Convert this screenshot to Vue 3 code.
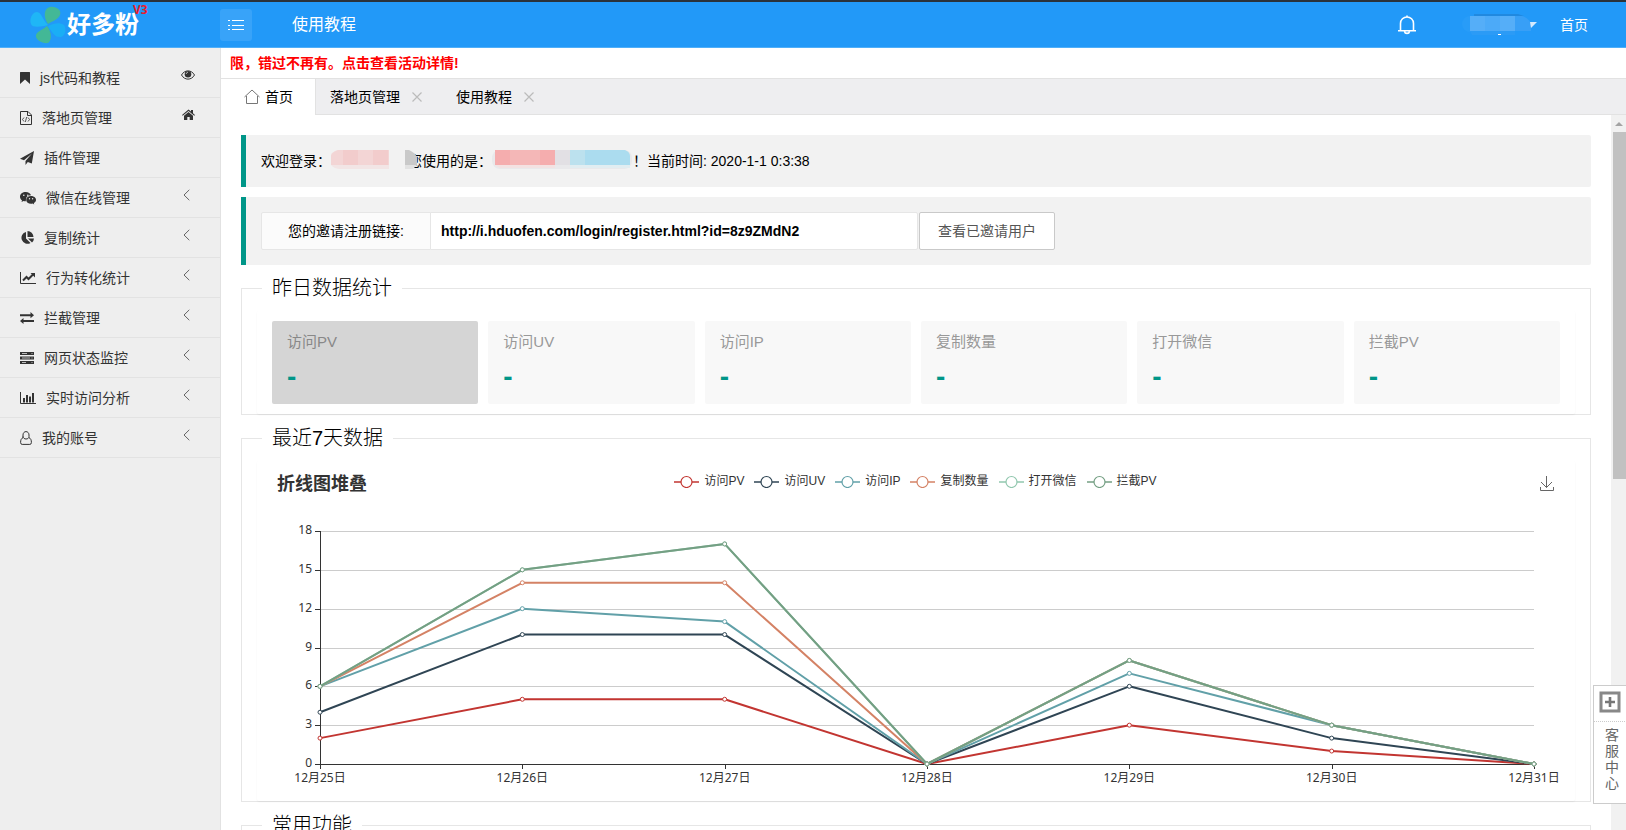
<script setup>
import { ref, computed, onMounted, onBeforeUnmount } from 'vue'

const menu = [
  { icon: 'bookmark', w: 10, label: 'js代码和教程', right: 'eye' },
  { icon: 'filecode', w: 12, label: '落地页管理', right: 'home' },
  { icon: 'plane', w: 14, label: '插件管理', right: '' },
  { icon: 'wechat', w: 16, label: '微信在线管理', right: 'more' },
  { icon: 'pie', w: 14, label: '复制统计', right: 'more' },
  { icon: 'line', w: 16, label: '行为转化统计', right: 'more' },
  { icon: 'exchange', w: 14, label: '拦截管理', right: 'more' },
  { icon: 'server', w: 14, label: '网页状态监控', right: 'more' },
  { icon: 'bars', w: 16, label: '实时访问分析', right: 'more' },
  { icon: 'user', w: 12, label: '我的账号', right: 'more' }
]

const stats = ['访问PV', '访问UV', '访问IP', '复制数量', '打开微信', '拦截PV']
const inviteLink = ref('http://i.hduofen.com/login/register.html?id=8z9ZMdN2')

const series = [
  { name: '访问PV', color: '#c23531', data: [2, 5, 5, 0, 3, 1, 0] },
  { name: '访问UV', color: '#2f4554', data: [4, 10, 10, 0, 6, 2, 0] },
  { name: '访问IP', color: '#61a0a8', data: [6, 12, 11, 0, 7, 3, 0] },
  { name: '复制数量', color: '#d48265', data: [6, 14, 14, 0, 8, 3, 0] },
  { name: '打开微信', color: '#91c7ae', data: [6, 15, 17, 0, 8, 3, 0] },
  { name: '拦截PV', color: '#749f83', data: [6, 15, 17, 0, 8, 3, 0] }
]
const days = ['12月25日', '12月26日', '12月27日', '12月28日', '12月29日', '12月30日', '12月31日']
const ticks = [0, 3, 6, 9, 12, 15, 18]

const plot = ref(null)
const width = ref(1318)
const left = 63
const top = 25
const bottom = 258
const right = computed(() => width.value - 41)
const x = (i) => left + ((right.value - left) * i) / (days.length - 1)
const y = (v) => bottom - ((bottom - top) * v) / 18
const line = (data) => data.map((v, i) => `${x(i)},${y(v)}`).join(' ')

let observer
onMounted(() => {
  const measure = () => { width.value = plot.value.clientWidth }
  measure()
  observer = new ResizeObserver(measure)
  observer.observe(plot.value)
})
onBeforeUnmount(() => observer.disconnect())
</script>

<template>
  <div class="app">
    <header class="header">
      <div class="logo">
        <svg class="clover" width="36" height="38" viewBox="0 0 36 38" aria-hidden="true">
          <path d="M18 18C13 11 14 2 20 1c6-1 12 3 10 8-2 5-8 6-12 9z" fill="#43b896" />
          <path d="M18 19C12 13 12 7 7 6 2 6-1 14 1 18c1 4 10 3 17 1z" fill="#1fb6f6" />
          <path d="M18 20C24 17 30 16 34 19c3 4 1 12-4 12-6 0-8-5-12-11z" fill="#1aaef5" />
          <path d="M17 20C22 26 22 35 18 37c-5 1-13-3-12-8 1-4 7-5 11-9z" fill="#43b896" />
        </svg>
        <span class="brand">好多粉</span>
        <sup class="version">V3</sup>
      </div>
      <div class="header-left">
        <button class="toggle" type="button" aria-label="菜单">
          <svg width="18" height="12" viewBox="0 0 18 12" stroke="#fff" fill="none">
            <path d="M5 1.500H17M5 6.500H17M5 10.500H17M1 1.500H3M1 6.500H3M1 10.500H3" />
          </svg>
        </button>
        <a class="guide" href="#">使用教程</a>
      </div>
      <nav class="header-right">
        <a class="bell" href="#" aria-label="消息">
          <svg width="20" height="20" viewBox="0 0 20 20" fill="none" stroke="#fff" stroke-width="1.600">
            <path d="M3.500 15.500V8.500C3.500 4.500 6.500 2 10 2s6.500 2.500 6.500 6.500v7M1 15.800H19M10 0.500V2M7.500 16.500c.5 2.500 4.500 2.500 5 0" />
          </svg>
        </a>
        <button class="account" type="button" aria-label="账户">
          <svg width="76" height="22" viewBox="0 0 76 22">
            <path d="M12 0H56l6 2H12z" fill="#2089e0" />
            <rect y="2" width="30" height="16" rx="8" fill="#289cf8" />
            <path d="M20 2H60Q67 4 69 10V17H20z" fill="#389ff6" />
            <path d="M8 17H53V21H10z" fill="#2b9bf6" />
            <rect x="8" y="2" width="45" height="15" fill="#55aef8" />
            <rect x="23" y="2" width="15" height="15" fill="#4caaf8" />
            <path d="M68 8h7l-6 6z" fill="#d4eafd" />
            <path d="M36 20.500h3" stroke="#fff" />
          </svg>
        </button>
        <a class="home-link" href="#">首页</a>
      </nav>
    </header>

    <div class="body">
      <aside class="sidebar">
        <ul>
          <li v-for="m in menu" :key="m.label">
            <a href="#">
              <svg class="mi" :width="m.w" height="14" :viewBox="`0 0 ${m.w} 14`" aria-hidden="true">
                <path v-if="m.icon === 'bookmark'" d="M0 1.500Q0 1 .5 1h9q.5 0 .5.500V13L5 8.500 0 13z" fill="#333" />
                <g v-else-if="m.icon === 'filecode'" fill="none" stroke="#333">
                  <path d="M.5.500H8L11.500 4V13.500H.5zM7.500.500V4.500H11.500" />
                  <path d="M4 6.500 2.500 8.500 4 10.500M8 6.500l1.500 2L8 10.500M6.700 6 5.300 11" stroke-width=".8" />
                </g>
                <path v-else-if="m.icon === 'plane'" d="M14 0 11.800 12.600 7.800 11 5.500 14V10L12 2.500 4 9.300 0 7.800z" fill="#333" />
                <g v-else-if="m.icon === 'wechat'">
                  <path d="M5.800 1C2.600 1 0 3.100 0 5.700c0 1.500.8 2.800 2 3.600L1.500 11l2-1c.7.200 1.500.300 2.300.300L6 8C6 6 8 4.300 11 4.300 10.500 2.400 8.300 1 5.800 1z" fill="#333" />
                  <path d="M11 5c-2.700 0-4.800 1.700-4.800 3.900s2.100 3.900 4.800 3.900c.6 0 1.100-.1 1.600-.2l1.600.9-.4-1.500c1.300-.7 2.200-1.800 2.200-3.100C16 6.700 13.700 5 11 5z" fill="#333" />
                  <g fill="#eee"><circle cx="3.800" cy="4.200" r=".8" /><circle cx="7.800" cy="4.200" r=".8" /><circle cx="9.500" cy="7.800" r=".7" /><circle cx="12.600" cy="7.800" r=".7" /></g>
                </g>
                <path v-else-if="m.icon === 'pie'" d="M6 1V7.500L10.500 12A6 6 0 1 1 6 1zM7.500 0A6.200 6.200 0 0 1 13.500 6H7.500zM8 7.500H14A6 6 0 0 1 12 11.500z" fill="#333" />
                <g v-else-if="m.icon === 'line'" fill="none" stroke="#333">
                  <path d="M.5 1V12.500H16" />
                  <path d="M3 9.500 6.500 6l2 2L13 3.500" stroke-width="2" /><path d="M10.500 2H15V6.500z" fill="#333" stroke="none" />
                </g>
                <path v-else-if="m.icon === 'exchange'" d="M0 3.200H10.500V1L14 4.200 10.500 7.200V5.200H0zM14 9H3.500V7L0 10 3.500 13V11H14z" fill="#333" />
                <g v-else-if="m.icon === 'server'">
                  <path d="M0 1H14V4H0zM0 5.500H14V8.500H0zM0 10H14V13H0z" fill="#333" />
                  <path d="M2 2.500H7M2 7H10M2 11.500H6M11.500 2.500h1M11.500 7h1M11.500 11.500h1" stroke="#ddd" stroke-width=".8" />
                </g>
                <g v-else-if="m.icon === 'bars'">
                  <path d="M.5 1V12.500H16" fill="none" stroke="#333" />
                  <path d="M3 7H5V11.500H3zM6 4H8V11.500H6zM9 5.500H11V11.500H9zM12 2H14V11.500H12z" fill="#333" />
                </g>
                <path v-else d="M3 6.500V4C3 2 4.300.600 6 .600S9 2 9 4v1.500C9 7 7.800 8 6 8 4.500 8 3 7 3 5.500M3.200 6.500C1.200 7.500.600 9 .600 11.500q0 1.900 1.600 1.900h7.600q1.600 0 1.600-1.900c0-2.500-.6-4-2.600-5" fill="none" stroke="#333" />
              </svg>
              <span class="label">{{ m.label }}</span>
              <svg v-if="m.right === 'eye'" class="ri" width="14" height="10" viewBox="0 0 14 10" aria-hidden="true">
                <path d="M.5 5C3.500-.5 10.500-.5 13.500 5 10.500 10.500 3.500 10.500.5 5z" fill="none" stroke="#333" />
                <circle cx="7" cy="4.200" r="3.300" fill="#333" /><path d="M5.300 4c0-1 .7-1.700 1.700-1.700" stroke="#eee" stroke-width=".8" fill="none" />
              </svg>
              <svg v-else-if="m.right === 'home'" class="ri" width="13" height="12" viewBox="0 0 13 12" aria-hidden="true">
                <path d="M0 6 6.500.500 9 2.600V1h2v3.300L13 6l-.7.800L6.500 2 .7 6.800zM2 6.700 6.500 3 11 6.700V11H7.700V8H5.300v3H2z" fill="#333" />
              </svg>
              <svg v-else-if="m.right === 'more'" class="ri more" width="7" height="12" viewBox="0 0 7 12" aria-hidden="true">
                <path d="M6.300.800 1 6l5.300 5.200" fill="none" stroke="#666" />
              </svg>
            </a>
          </li>
        </ul>
      </aside>

      <main class="main">
        <a class="notice" href="#">限，错过不再有。点击查看活动详情!</a>
        <nav class="tabs">
          <a class="tab active" href="#">
            <svg width="16" height="16" viewBox="0 0 16 16" fill="none" stroke="#777" aria-hidden="true">
              <path d="M.5 8 8 1 15.500 8M2.500 7V14.500H13.500V7" />
            </svg>
            <span>首页</span>
          </a>
          <div v-for="t in ['落地页管理', '使用教程']" :key="t" class="tab">
            <a href="#">{{ t }}</a>
            <button type="button" :aria-label="'关闭' + t">
              <svg width="10" height="10" viewBox="0 0 10 10" stroke="#bbb" stroke-width="1.200"><path d="M.5.500l9 9M9.500.500l-9 9" /></svg>
            </button>
          </div>
        </nav>

        <div class="viewport">
          <div class="content">
            <section class="quote welcome">
              <span>欢迎登录：</span>
              <svg class="mask" width="77" height="20" viewBox="2 0 77 20">
                <path d="M10 0H60V19H10A9 9 0 0 1 10 0z" fill="#f2e5e5" />
                <path d="M9 0H60V15H1Q-1 3 9 0z" fill="#f3d5d5" />
                <path d="M14 0h15v15H14zM44 0h15v15H44z" fill="#f2cccc" />
              </svg>
              <span class="using">您使用的是：
                <svg class="blob" width="12" height="20" viewBox="0 0 12 20">
                  <path d="M0 0H4q7 3 8 8v7H0z" fill="#c9c9c9" /><path d="M0 15H12l-4 4H0z" fill="#e2e2e2" />
                </svg>
              </span>
              <svg class="mask" width="141" height="20" viewBox="0 0 141 20">
                <rect width="140" height="19" rx="8" fill="#e9e9eb" />
                <path d="M3 15H63v3H8z" fill="#f3e2e2" /><path d="M78 15h60v3H78z" fill="#e1edf1" />
                <path d="M3 0h60v15H3z" fill="#f4b7b7" /><path d="M3 0h15v15H3zM48 0h15v15H48z" fill="#f5adae" />
                <path d="M63 0h15v15H63z" fill="#e2e0e4" /><path d="M78 0h15v15H78z" fill="#bce1ee" />
                <path d="M93 0h40q5 2 5 6v9H93z" fill="#abdcef" />
              </svg>
              <span>！当前时间: 2020-1-1 0:3:38</span>
            </section>

            <section class="quote invite">
              <label for="invite">您的邀请注册链接:</label>
              <input id="invite" v-model="inviteLink" type="text" />
              <button type="button">查看已邀请用户</button>
            </section>

            <fieldset>
              <legend>昨日数据统计</legend>
              <div class="card stats">
                <a v-for="(s, i) in stats" :key="s" href="#" class="stat" :class="{ hover: i === 0 }">
                  <h3>{{ s }}</h3>
                  <p>-</p>
                </a>
              </div>
            </fieldset>

            <fieldset>
              <legend>最近7天数据</legend>
              <div class="card chart">
                <div class="chart-head">
                  <h2>折线图堆叠</h2>
                  <ul class="keys">
                    <li v-for="s in series" :key="s.name">
                      <svg width="25" height="14" viewBox="0 0 25 14" :stroke="s.color">
                        <path d="M0 8H25" stroke-width="1.500" /><circle cx="12.500" cy="8" r="5.500" fill="#fff" stroke-width="1.200" />
                      </svg>
                      <span>{{ s.name }}</span>
                    </li>
                  </ul>
                  <button class="save" type="button" aria-label="保存为图片">
                    <svg width="14" height="16" viewBox="0 0 14 16" fill="none" stroke="#666">
                      <path d="M.5 11V14.500H13.500V11M6.500 0V11.500M1 6l5.500 5.500L12 6" />
                    </svg>
                  </button>
                </div>
                <div ref="plot" class="plot">
                  <svg :width="width" height="295">
                    <g v-for="t in ticks" :key="t">
                      <line :x1="left" :x2="right" :y1="Math.round(y(t)) + 0.5" :y2="Math.round(y(t)) + 0.5" :stroke="t ? '#ccc' : '#333'" />
                      <line :x1="left - 5" :x2="left" :y1="Math.round(y(t)) + 0.5" :y2="Math.round(y(t)) + 0.5" stroke="#333" />
                      <text :x="left - 8" :y="y(t) + 3" text-anchor="end">{{ t }}</text>
                    </g>
                    <line :x1="left + 0.5" :x2="left + 0.5" :y1="top" :y2="bottom" stroke="#333" />
                    <g v-for="(d, i) in days" :key="d">
                      <line :x1="Math.round(x(i)) + 0.5" :x2="Math.round(x(i)) + 0.5" :y1="bottom" :y2="bottom + 5" stroke="#333" />
                      <text :x="x(i)" :y="bottom + 18" text-anchor="middle">{{ d }}</text>
                    </g>
                    <g v-for="s in series" :key="s.name" :stroke="s.color">
                      <polyline :points="line(s.data)" fill="none" stroke-width="2" stroke-linejoin="bevel" />
                      <circle v-for="(v, i) in s.data" :key="i" :cx="x(i)" :cy="y(v)" r="2" fill="#fff" />
                    </g>
                  </svg>
                </div>
              </div>
            </fieldset>

            <fieldset>
              <legend>常用功能</legend>
              <div class="card"></div>
            </fieldset>
          </div>
          <div class="scrollbar" aria-hidden="true">
            <svg width="15" height="17" viewBox="0 0 15 17"><path d="M4 11l4-4 4 4z" fill="#a3a3a3" /></svg>
            <div class="thumb"></div>
          </div>
        </div>
      </main>
    </div>

    <button class="service" type="button">
      <svg width="22" height="22" viewBox="0 0 22 22" fill="none" stroke="#888">
        <rect x="2" y="2" width="18" height="18" stroke-width="3" /><path d="M11 6V16M6 11H16" stroke-width="2.600" stroke="#777" />
      </svg>
      <span>客服中心</span>
    </button>
  </div>
</template>

<style>
body { margin: 0; overflow: hidden; }
</style>

<style scoped>
* { box-sizing: border-box; }
.app {
  height: 100vh;
  display: flex;
  flex-direction: column;
  font: 14px/24px "Liberation Sans", "Noto Sans CJK SC", sans-serif;
  color: #000;
  background: #fff;
  overflow: hidden;
}
a { color: inherit; text-decoration: none; }
button { font: inherit; padding: 0; border: 0; background: none; cursor: pointer; }
ul { list-style: none; margin: 0; padding: 0; }
h2, h3, p { margin: 0; }
svg { display: block; flex: none; }

.header {
  flex: none;
  height: 48px;
  display: flex;
  align-items: center;
  background: #2299f8;
  border-top: 2px solid #2a323b;
  border-bottom: 1px solid #50aff9;
  color: #fff;
}
.logo { width: 220px; height: 100%; padding-left: 30px; display: flex; align-items: center; }
.brand { margin-left: 1px; font-size: 24px; font-weight: 700; }
.version { align-self: flex-start; margin-left: -6px; font: bold 12px/16px "Noto Sans", sans-serif; color: #e81c2c; }
.header-left { display: flex; align-items: center; gap: 40px; flex: 1; }
.toggle { width: 32px; height: 32px; display: grid; place-items: center; border-radius: 3px; background: #38a3f9; }
.guide { font-size: 16px; }
.header-right { display: flex; align-items: center; padding-right: 38px; }
.bell { margin-right: 45px; }
.account { margin-right: 22px; }

.body { flex: 1; min-height: 0; display: flex; }
.sidebar { flex: none; width: 221px; padding-top: 10px; background: #eee; border-right: 1px solid #e2e2e2; color: #333; }
.sidebar li { height: 40px; border-bottom: 1px solid #e2e2e2; }
.sidebar a { height: 100%; padding: 0 25px 0 20px; display: flex; align-items: center; }
.label { flex: 1; margin-left: 10px; }
.ri { margin-bottom: 5px; }
.more { margin-right: 5px; }

.main { flex: 1; min-width: 0; display: flex; flex-direction: column; }
.notice { flex: none; height: 31px; padding-left: 9px; line-height: 30px; font-weight: bold; color: #f00; border-bottom: 1px solid #e2e2e2; }
.tabs { flex: none; height: 36px; display: flex; background: #eeeef0; border-bottom: 1px solid #e2e2e2; }
.tab { display: flex; align-items: center; gap: 12px; padding: 0 20px 0 14px; height: 36px; }
.tab.active { gap: 5px; padding: 0 22px 0 23px; background: #fff; border-right: 1px solid #e2e2e2; }

.viewport { flex: 1; min-height: 0; display: flex; }
.content { flex: 1; min-width: 0; padding: 20px; overflow-y: auto; scrollbar-width: none; }
.scrollbar { flex: none; width: 15px; background: #f1f1f1; }
.thumb { height: 48.5%; margin-left: 2px; background: #c1c1c1; }

.quote { display: flex; align-items: center; margin-bottom: 10px; padding: 14px 15px; background: #f2f2f2; border-left: 5px solid #009688; border-radius: 0 2px 2px 0; white-space: nowrap; }
.mask { margin-bottom: 3px; }
.using { position: relative; }
.blob { position: absolute; left: -3px; top: 1px; }
.invite { padding: 15px; }
.invite label { width: 170px; height: 38px; line-height: 36px; text-align: center; background: #fbfbfb; border: 1px solid #e6e6e6; border-radius: 2px 0 0 2px; }
.invite input { width: 488px; height: 38px; margin-left: -1px; padding: 0 10px; font: bold 14px "Liberation Sans", sans-serif; color: #000; background: #fff; border: 1px solid #e6e6e6; border-radius: 0 2px 2px 0; }
.invite button { height: 38px; margin-left: 1px; padding: 0 18px; color: #555; background: #fff; border: 1px solid #c9c9c9; border-radius: 2px; }

fieldset { min-width: 0; margin: 0 0 10px; padding: 10px 15px 0; border: 1px solid #e6e6e6; }
legend { margin-left: 5px; padding: 0 10px; font-size: 20px; font-weight: 300; line-height: 26px; }
.card { min-height: 60px; border-radius: 2px; box-shadow: 0 1px 2px rgba(0, 0, 0, 0.05); }
.stats { display: grid; grid-template-columns: repeat(6, 1fr); gap: 10px; padding: 10px 15px; }
.stat { padding: 10px 15px; background: #f8f8f8; border-radius: 2px; color: #999; }
.stat.hover { background: #d5d5d5; color: #888; }
.stat h3 { font-size: 15px; font-weight: 400; line-height: 22px; }
.stat p { padding: 9px 0 2px; font-size: 28px; font-weight: 700; line-height: 30px; color: #009688; }

.chart-head { display: grid; grid-template-columns: 1fr auto 1fr; align-items: center; padding: 9px 21px 8px 20px; color: #333; }
.chart-head h2 { font-size: 18px; line-height: 28px; }
.save { justify-self: end; }
.keys { display: flex; gap: 10px; padding-bottom: 6px; font-size: 12px; line-height: 18px; }
.keys li { display: flex; align-items: center; gap: 5px; }
.plot { overflow: hidden; }
.plot text { font: 12px "Noto Sans", "Noto Sans CJK SC", sans-serif; fill: #333; }

.service { position: fixed; right: -2px; bottom: 26px; width: 35px; height: 119px; display: flex; flex-direction: column; align-items: center; padding: 5px 2px 0 0; background: #fff; border: 1px solid #ccc; color: #666; }
.service span { width: 100%; margin-top: 8px; padding: 5px 8px 0 11px; border-top: 1px dotted #ccc; font-size: 14px; line-height: 16px; word-break: break-all; }
</style>
